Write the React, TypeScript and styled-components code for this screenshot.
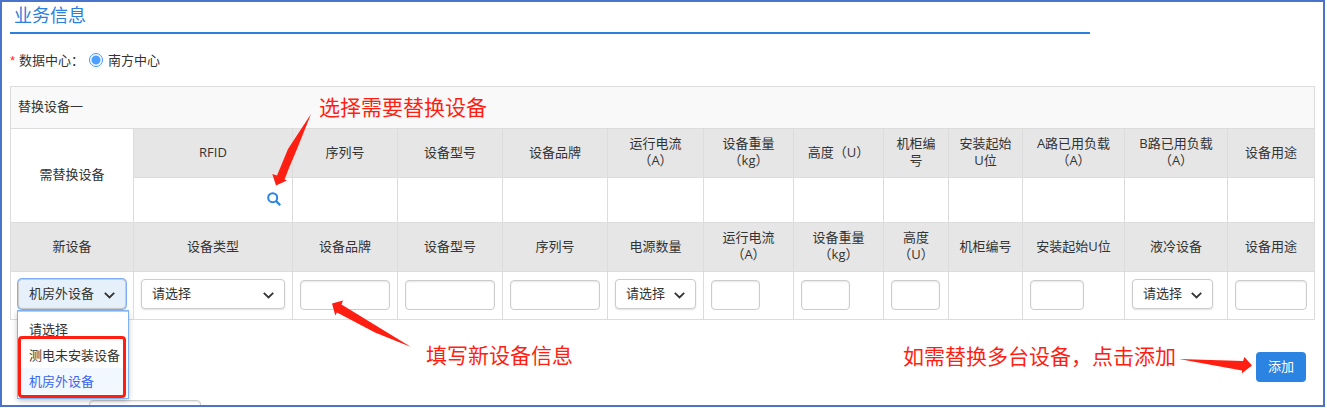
import React from "react";
import styled, { createGlobalStyle, css } from "styled-components";

const GlobalStyle = createGlobalStyle`
  *, *::before, *::after { box-sizing: border-box; }
  body {
    margin: 0;
    background: #fff;
    color: #333;
    font: 13px/17px "Open Sans", "Noto Sans CJK SC", sans-serif;
    text-spacing-trim: space-all;
  }
  button, input, select { font: inherit; color: inherit; }
`;

const Frame = styled.main`
  position: relative;
  margin: 0 2px 1px 0;
  padding: 0 8px;
  border: 2px solid #4a73cc;
`;

const Title = styled.h2`
  margin: 0;
  padding: 0 4px 4px;
  max-width: 1080px;
  border-bottom: 2px solid #2b80dd;
  color: #2b80dd;
  font-size: 18px;
  font-weight: 400;
  line-height: 26px;
`;

const CenterField = styled.fieldset`
  display: flex;
  align-items: center;
  margin: 0;
  padding: 0;
  border: 0;
  height: 52px;
`;

const FieldName = styled.span`
  width: 79px;
`;

const Required = styled.span`
  margin-right: 4px;
  color: #ff2a1a;
  font-family: "Liberation Sans", sans-serif;
`;

const RadioLabel = styled.label`
  display: flex;
  align-items: center;
  gap: 5px;
`;

const Radio = styled.input`
  appearance: none;
  width: 14px;
  height: 14px;
  margin: 0;
  border: 1px solid #4096ff;
  border-radius: 50%;
  background: radial-gradient(circle, #4a9fff 4px, #fff 5px);
`;

const Grid = styled.table`
  width: 100%;
  table-layout: fixed;
  border-collapse: collapse;
`;

const cell = css`
  padding: 6px 7px 8px;
  border: 1px solid #dcdcdc;
  font-weight: 400;
  text-align: center;
`;

const GroupHead = styled.th`
  ${cell}
  height: 42px;
  background: #f9f9f9;
  text-align: left;
`;

const Head = styled.th<{ $plain?: boolean }>`
  ${cell}
  height: 49px;
  background: ${(p) => (p.$plain ? "#fff" : "#e6e6e6")};
`;

const EmptyCell = styled.td`
  ${cell}
  height: 45px;
  text-align: right;
`;

const FieldCell = styled.td`
  ${cell}
  height: 48px;
  padding: 7px;
  text-align: left;
  vertical-align: top;
`;

const SearchButton = styled.button`
  display: inline-flex;
  padding: 0 0 2px;
  margin-right: 4px;
  border: 0;
  background: none;
  color: #2b84e0;
  vertical-align: middle;
`;

const TextInput = styled.input<{ $width?: number }>`
  display: block;
  width: ${(p) => (p.$width ? `${p.$width}px` : "100%")};
  height: 30px;
  margin-top: 1px;
  padding: 0 10px;
  border: 1px solid #ccc;
  border-radius: 4px;
  background: #fff;
  box-shadow: inset 0 1px 2px rgba(0, 0, 0, 0.1);
`;

const SelectBox = styled.div<{ $width?: number }>`
  position: relative;
  width: ${(p) => (p.$width ? `${p.$width}px` : "100%")};
`;

const Select = styled.select<{ $open?: boolean }>`
  appearance: none;
  display: block;
  width: 100%;
  height: 30px;
  padding: 0 10px 2px;
  border: 1px solid #ccc;
  border-radius: 4px;
  background: ${(p) => (p.$open ? "#e5f0fa" : "#fff")};
  box-shadow: ${(p) => (p.$open ? "0 0 0 1px #7fb0f5" : "0 1px 2px rgba(0, 0, 0, 0.12)")};
`;

const Chevron = styled.svg`
  position: absolute;
  right: 11px;
  top: 13px;
  pointer-events: none;
`;

const Menu = styled.ul`
  position: absolute;
  z-index: 1;
  top: 32px;
  left: 0;
  width: 110px;
  margin: 0;
  padding: 4px 0;
  border-top: 1px solid #ccc;
  background: #fff;
  box-shadow: 0 0 0 1px #7fb0f5, 0 2px 6px rgba(0, 0, 0, 0.3);
  list-style: none;
`;

const Option = styled.li<{ $active?: boolean }>`
  padding: 0 0 0 11px;
  line-height: 26px;
  white-space: nowrap;
  ${(p) => p.$active && "background: #f2f8ff; color: #3b66f0;"}
`;

const Highlight = styled.div`
  position: absolute;
  z-index: 2;
  top: 57px;
  left: 0;
  width: 108px;
  height: 62px;
  border: 3px solid #ff1e12;
  border-radius: 4px;
`;

const Actions = styled.div`
  display: flex;
  justify-content: flex-end;
  padding: 32px 9px 17px;
`;

const AddButton = styled.button`
  height: 30px;
  padding: 0 12px 2px;
  border: 0;
  border-radius: 4px;
  background: #2b84e2;
  color: #fff;
`;

const NextRow = styled.div`
  height: 6px;
  padding-left: 79px;
  overflow: hidden;
`;

const Note = styled.p<{ $left: number; $top: number }>`
  position: absolute;
  z-index: 3;
  left: ${(p) => p.$left}px;
  top: ${(p) => p.$top}px;
  margin: 0;
  color: #ff1e12;
  font-size: 21px;
  line-height: 28px;
  white-space: nowrap;
`;

const Arrows = styled.svg`
  position: absolute;
  z-index: 3;
  left: -2px;
  top: -2px;
  fill: #ff1e12;
  pointer-events: none;
`;

const columns = [123, 159, 105, 105, 105, 96, 90, 90, 65, 74, 102, 103, 87];

const oldHeads = [
  "RFID", "序列号", "设备型号", "设备品牌", "运行电流（A）", "设备重量（kg）",
  "高度（U）", "机柜编号", "安装起始U位", "A路已用负载（A）", "B路已用负载（A）", "设备用途",
];

const newHeads = [
  "新设备", "设备类型", "设备品牌", "设备型号", "序列号", "电源数量", "运行电流（A）",
  "设备重量（kg）", "高度（U）", "机柜编号", "安装起始U位", "液冷设备", "设备用途",
];

function Picker(props: { label: string; value?: string; width?: number; open?: boolean; children?: React.ReactNode }) {
  return (
    <SelectBox $width={props.width}>
      <Select aria-label={props.label} $open={props.open}>
        <option>{props.value ?? "请选择"}</option>
      </Select>
      <Chevron width="11" height="7" viewBox="0 0 11 7" fill="none" stroke="#333" strokeWidth="1.8">
        <path d="M0.8 0.8 5.5 5.5 10.2 0.8" />
      </Chevron>
      {props.children}
    </SelectBox>
  );
}

export default function App() {
  return (
    <>
      <GlobalStyle />
      <Frame>
        <Title>业务信息</Title>
        <CenterField>
          <FieldName>
            <Required>*</Required>数据中心：
          </FieldName>
          <RadioLabel>
            <Radio type="radio" name="center" defaultChecked />
            南方中心
          </RadioLabel>
        </CenterField>

        <Grid>
          <colgroup>
            {columns.map((w, i) => (
              <col key={i} width={w} />
            ))}
          </colgroup>
          <tbody>
            <tr>
              <GroupHead colSpan={13}>替换设备一</GroupHead>
            </tr>
            <tr>
              <Head $plain rowSpan={2}>需替换设备</Head>
              {oldHeads.map((h) => (
                <Head key={h}>{h}</Head>
              ))}
            </tr>
            <tr>
              <EmptyCell>
                <SearchButton type="button" aria-label="查询">
                  <svg width="14" height="14" viewBox="0 0 14 14" fill="none" stroke="currentColor" strokeWidth="2">
                    <circle cx="5.7" cy="5.7" r="4.5" />
                    <path d="M8.9 8.9 13.2 13.2" strokeWidth="2.2" />
                  </svg>
                </SearchButton>
              </EmptyCell>
              {oldHeads.slice(1).map((h) => (
                <EmptyCell key={h} />
              ))}
            </tr>
            <tr>
              {newHeads.map((h) => (
                <Head key={h}>{h}</Head>
              ))}
            </tr>
            <tr>
              <FieldCell>
                <Picker label="新设备" value="机房外设备" open>
                  <Menu role="listbox">
                    <Option role="option">请选择</Option>
                    <Option role="option">测电未安装设备</Option>
                    <Option role="option" aria-selected $active>机房外设备</Option>
                  </Menu>
                  <Highlight />
                </Picker>
              </FieldCell>
              <FieldCell><Picker label="设备类型" /></FieldCell>
              <FieldCell><TextInput aria-label="设备品牌" /></FieldCell>
              <FieldCell><TextInput aria-label="设备型号" /></FieldCell>
              <FieldCell><TextInput aria-label="序列号" /></FieldCell>
              <FieldCell><Picker label="电源数量" /></FieldCell>
              <FieldCell><TextInput aria-label="运行电流" $width={49} /></FieldCell>
              <FieldCell><TextInput aria-label="设备重量" $width={49} /></FieldCell>
              <FieldCell><TextInput aria-label="高度" $width={49} /></FieldCell>
              <FieldCell />
              <FieldCell><TextInput aria-label="安装起始U位" $width={54} /></FieldCell>
              <FieldCell><Picker label="液冷设备" width={81} /></FieldCell>
              <FieldCell><TextInput aria-label="设备用途" /></FieldCell>
            </tr>
          </tbody>
        </Grid>

        <Actions>
          <AddButton type="button">添加</AddButton>
        </Actions>
        <NextRow>
          <TextInput aria-label="备注" $width={112} />
        </NextRow>

        <Note $left={317} $top={91}>选择需要替换设备</Note>
        <Note $left={424} $top={339}>填写新设备信息</Note>
        <Note $left={901} $top={340}>如需替换多台设备，点击添加</Note>
        <Arrows width="1325" height="407" viewBox="0 0 1325 407" aria-hidden="true">
          <path d="M311 114 297 149 289 168 284.5 179.5 287 180.5 276 185.5 272.3 174 277 175.5 288 149Z" />
          <path d="M411 347 375 325 341.5 304.5 343 300.5 332 303.5 335.3 315.5 337 312.5 375 332.5Z" />
          <path d="M1179 359 1243 361 1244.5 357 1252 365.5 1242 373.3 1242 370.5Z" />
        </Arrows>
      </Frame>
    </>
  );
}
